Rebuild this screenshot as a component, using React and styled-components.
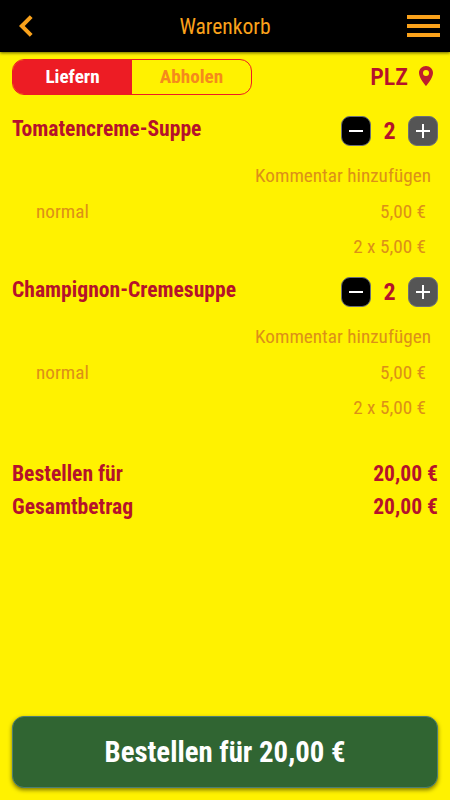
import React from 'react';
import styled, { createGlobalStyle } from 'styled-components';

const GlobalStyle = createGlobalStyle`
    * {
        box-sizing: border-box;
    }
    body {
        margin: 0;
        background: #fff200;
        font-family: "Roboto Condensed", Roboto, sans-serif;
        font-stretch: 75%;
    }
    button {
        font: inherit;
        font-stretch: inherit;
        padding: 0;
        border: none;
    }
`;

const items = [
    { name: 'Tomatencreme-Suppe', size: 'normal', price: '5,00 €', count: 2 },
    { name: 'Champignon-Cremesuppe', size: 'normal', price: '5,00 €', count: 2 },
];

function CartItem({ item }) {
    return (
        <Item>
            <ItemHead>
                <ItemName>{item.name}</ItemName>
                <Stepper>
                    <StepButton $color="#000">
                        <svg width="14" height="14" viewBox="0 0 14 14">
                            <path d="M0 7h14" stroke="#fff" strokeWidth="2" />
                        </svg>
                    </StepButton>
                    <Count>{item.count}</Count>
                    <StepButton $color="#555">
                        <svg width="14" height="14" viewBox="0 0 14 14">
                            <path d="M0 7h14M7 0v14" stroke="#fff" strokeWidth="2" />
                        </svg>
                    </StepButton>
                </Stepper>
            </ItemHead>
            <Comment>Kommentar hinzufügen</Comment>
            <ItemLine>
                <span>{item.size}</span>
                <span>{item.price}</span>
            </ItemLine>
            <ItemLine>
                <span />
                <span>{item.count} x {item.price}</span>
            </ItemLine>
        </Item>
    );
}

export default function App() {
    return (
        <Page>
            <GlobalStyle />
            <Header>
                <svg width="14" height="22" viewBox="0 0 14 22">
                    <path d="M12.2 1.6L2.8 11l9.4 9.4" fill="none" stroke="#faa21b" strokeWidth="4" />
                </svg>
                <Title>Warenkorb</Title>
                <svg width="33" height="22" viewBox="0 0 33 22">
                    <path d="M0 2h33M0 11h33M0 20h33" stroke="#faa21b" strokeWidth="4" />
                </svg>
            </Header>
            <Options>
                <Toggle>
                    <ToggleButton $active>Liefern</ToggleButton>
                    <ToggleButton>Abholen</ToggleButton>
                </Toggle>
                <Zip>
                    PLZ
                    <PinIcon viewBox="5 2 14 20">
                        <path d="M12 2C8.13 2 5 5.13 5 9c0 5.25 7 13 7 13s7-7.75 7-13c0-3.87-3.13-7-7-7zm0 10a3 3 0 0 1 0-6 3 3 0 0 1 0 6z" />
                    </PinIcon>
                </Zip>
            </Options>
            {items.map((item) => (
                <CartItem key={item.name} item={item} />
            ))}
            <Totals>
                <TotalLine>
                    <span>Bestellen für</span>
                    <span>20,00 €</span>
                </TotalLine>
                <TotalLine>
                    <span>Gesamtbetrag</span>
                    <span>20,00 €</span>
                </TotalLine>
            </Totals>
            <OrderButton>Bestellen für 20,00 €</OrderButton>
        </Page>
    );
}

const Page = styled.div`
    display: flex;
    flex-direction: column;
    height: 800px;
    padding-bottom: 12px;
`;

const Header = styled.header`
    display: flex;
    align-items: center;
    justify-content: space-between;
    height: 52px;
    flex: none;
    padding: 0 10px 0 19px;
    background: #000;
    box-shadow: 0 1px 3px rgba(0, 0, 0, 0.6);
`;

const Title = styled.h1`
    margin: 0 0 0 10px;
    color: #faa21b;
    font-size: 21.6px;
    font-weight: 400;
`;

const Options = styled.div`
    display: flex;
    align-items: center;
    justify-content: space-between;
    height: 36px;
    margin: 7px 17px 0 12px;
`;

const Toggle = styled.div`
    display: flex;
    width: 240px;
    height: 36px;
    border: 1px solid #ed1c24;
    border-radius: 12px;
    overflow: hidden;
`;

const ToggleButton = styled.button`
    flex: 1;
    padding-bottom: 2px;
    background: ${(props) => (props.$active ? '#ed1c24' : 'transparent')};
    color: ${(props) => (props.$active ? '#fff' : '#f58a1c')};
    font-size: 19.2px;
    font-weight: 700;
`;

const Zip = styled.div`
    display: flex;
    align-items: center;
    gap: 11px;
    color: #b5122b;
    font-size: 24px;
    font-weight: 600;
`;

const PinIcon = styled.svg`
    width: 14px;
    height: 20px;
    margin-bottom: 2px;
    fill: #be1e2d;
`;

const Item = styled.section`
    height: 161px;
    flex: none;
    padding: 21px 12px 0;
`;

const ItemHead = styled.div`
    display: flex;
    justify-content: space-between;
    height: 42px;
`;

const ItemName = styled.h2`
    margin: 0;
    color: #b5122b;
    font-size: 21.6px;
    font-weight: 700;
    line-height: 25px;
`;

const Stepper = styled.div`
    display: flex;
    align-items: center;
    height: 30px;
`;

const StepButton = styled.button`
    display: flex;
    align-items: center;
    justify-content: center;
    width: 30px;
    height: 30px;
    border: 1px solid #6b7078;
    border-radius: 9px;
    background: ${(props) => props.$color};
`;

const Count = styled.span`
    width: 37px;
    color: #b5122b;
    font-size: 24px;
    font-weight: 700;
    text-align: center;
`;

const Comment = styled.div`
    padding-right: 7px;
    color: #dc9018;
    font-size: 19.2px;
    line-height: 35px;
    height: 36px;
    text-align: right;
`;

const ItemLine = styled.div`
    display: flex;
    justify-content: space-between;
    padding: 0 12px 0 24px;
    color: #dc9018;
    font-size: 19.2px;
    line-height: 35px;
`;

const Totals = styled.div`
    margin-top: 40px;
    padding: 0 12px;
`;

const TotalLine = styled.div`
    display: flex;
    justify-content: space-between;
    color: #b5122b;
    font-size: 21.6px;
    font-weight: 700;
    line-height: 33px;
`;

const OrderButton = styled.button`
    flex: none;
    height: 72px;
    margin: auto 12px 0;
    background: #306532;
    color: #fff;
    font-size: 28.8px;
    font-weight: 700;
    && {
        border: 1px solid #4d7f72;
    }
    border-radius: 12px;
    box-shadow: 0 2px 4px rgba(0, 0, 0, 0.5);
`;
